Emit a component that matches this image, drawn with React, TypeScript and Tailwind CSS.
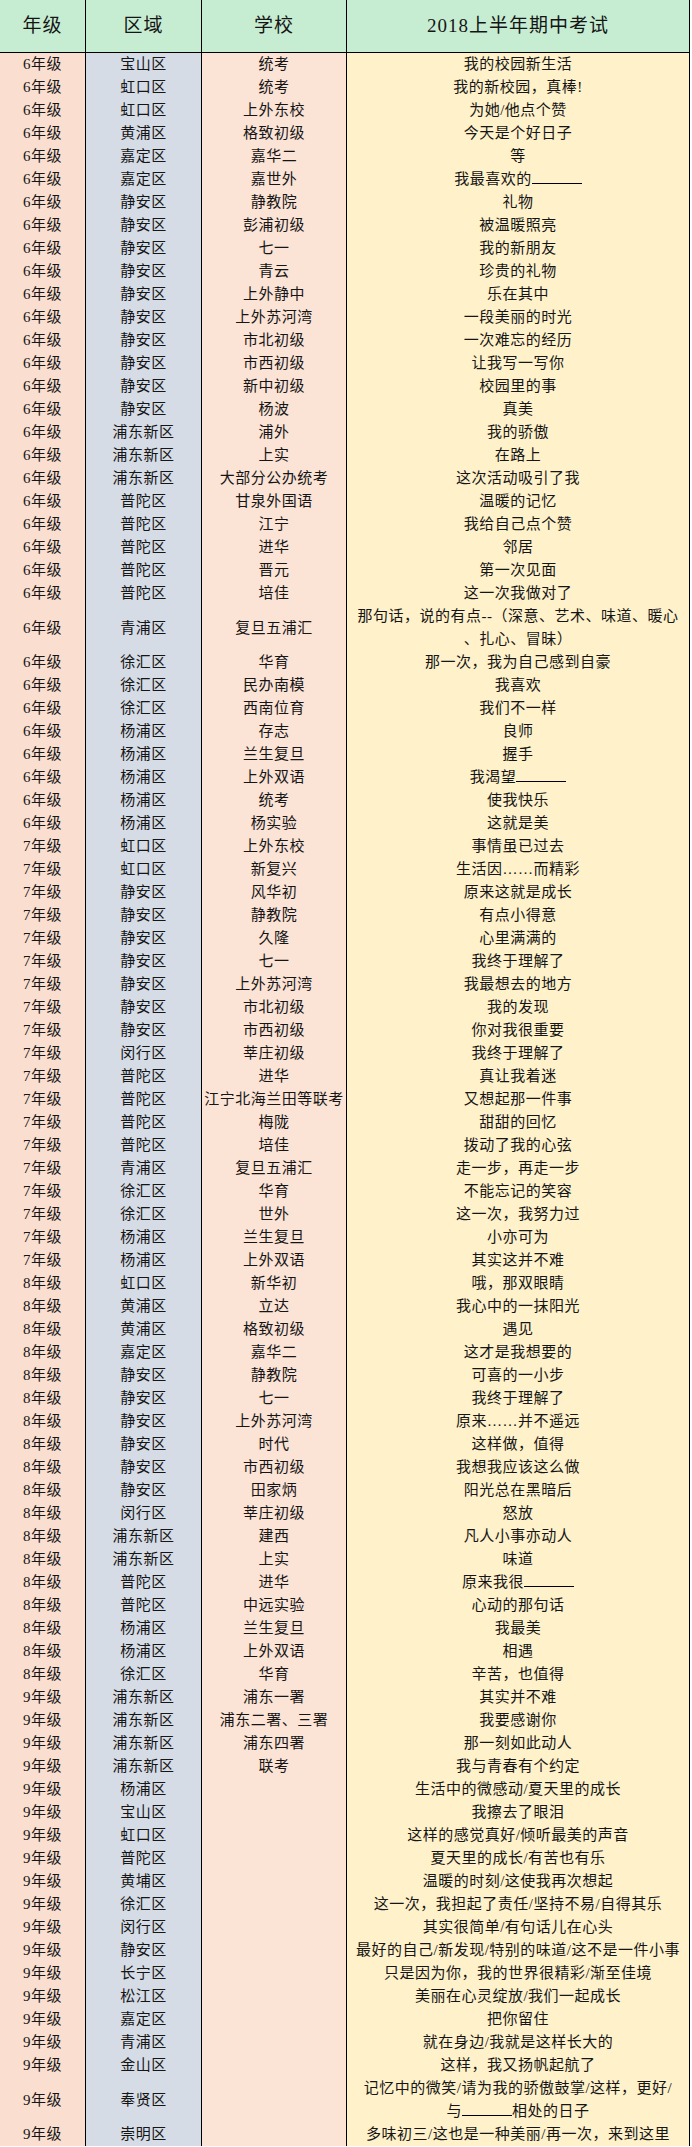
import React from "react";

type Row = [string, string, string, string];

const rows: Row[] = [
  ["6年级", "宝山区", "统考", "我的校园新生活"],
  ["6年级", "虹口区", "统考", "我的新校园，真棒!"],
  ["6年级", "虹口区", "上外东校", "为她/他点个赞"],
  ["6年级", "黄浦区", "格致初级", "今天是个好日子"],
  ["6年级", "嘉定区", "嘉华二", "等"],
  ["6年级", "嘉定区", "嘉世外", "我最喜欢的______"],
  ["6年级", "静安区", "静教院", "礼物"],
  ["6年级", "静安区", "彭浦初级", "被温暖照亮"],
  ["6年级", "静安区", "七一", "我的新朋友"],
  ["6年级", "静安区", "青云", "珍贵的礼物"],
  ["6年级", "静安区", "上外静中", "乐在其中"],
  ["6年级", "静安区", "上外苏河湾", "一段美丽的时光"],
  ["6年级", "静安区", "市北初级", "一次难忘的经历"],
  ["6年级", "静安区", "市西初级", "让我写一写你"],
  ["6年级", "静安区", "新中初级", "校园里的事"],
  ["6年级", "静安区", "杨波", "真美"],
  ["6年级", "浦东新区", "浦外", "我的骄傲"],
  ["6年级", "浦东新区", "上实", "在路上"],
  ["6年级", "浦东新区", "大部分公办统考", "这次活动吸引了我"],
  ["6年级", "普陀区", "甘泉外国语", "温暖的记忆"],
  ["6年级", "普陀区", "江宁", "我给自己点个赞"],
  ["6年级", "普陀区", "进华", "邻居"],
  ["6年级", "普陀区", "晋元", "第一次见面"],
  ["6年级", "普陀区", "培佳", "这一次我做对了"],
  ["6年级", "青浦区", "复旦五浦汇", "那句话，说的有点--（深意、艺术、味道、暖心\n、扎心、冒昧）"],
  ["6年级", "徐汇区", "华育", "那一次，我为自己感到自豪"],
  ["6年级", "徐汇区", "民办南模", "我喜欢"],
  ["6年级", "徐汇区", "西南位育", "我们不一样"],
  ["6年级", "杨浦区", "存志", "良师"],
  ["6年级", "杨浦区", "兰生复旦", "握手"],
  ["6年级", "杨浦区", "上外双语", "我渴望______"],
  ["6年级", "杨浦区", "统考", "使我快乐"],
  ["6年级", "杨浦区", "杨实验", "这就是美"],
  ["7年级", "虹口区", "上外东校", "事情虽已过去"],
  ["7年级", "虹口区", "新复兴", "生活因……而精彩"],
  ["7年级", "静安区", "风华初", "原来这就是成长"],
  ["7年级", "静安区", "静教院", "有点小得意"],
  ["7年级", "静安区", "久隆", "心里满满的"],
  ["7年级", "静安区", "七一", "我终于理解了"],
  ["7年级", "静安区", "上外苏河湾", "我最想去的地方"],
  ["7年级", "静安区", "市北初级", "我的发现"],
  ["7年级", "静安区", "市西初级", "你对我很重要"],
  ["7年级", "闵行区", "莘庄初级", "我终于理解了"],
  ["7年级", "普陀区", "进华", "真让我着迷"],
  ["7年级", "普陀区", "江宁北海兰田等联考", "又想起那一件事"],
  ["7年级", "普陀区", "梅陇", "甜甜的回忆"],
  ["7年级", "普陀区", "培佳", "拨动了我的心弦"],
  ["7年级", "青浦区", "复旦五浦汇", "走一步，再走一步"],
  ["7年级", "徐汇区", "华育", "不能忘记的笑容"],
  ["7年级", "徐汇区", "世外", "这一次，我努力过"],
  ["7年级", "杨浦区", "兰生复旦", "小亦可为"],
  ["7年级", "杨浦区", "上外双语", "其实这并不难"],
  ["8年级", "虹口区", "新华初", "哦，那双眼睛"],
  ["8年级", "黄浦区", "立达", "我心中的一抹阳光"],
  ["8年级", "黄浦区", "格致初级", "遇见"],
  ["8年级", "嘉定区", "嘉华二", "这才是我想要的"],
  ["8年级", "静安区", "静教院", "可喜的一小步"],
  ["8年级", "静安区", "七一", "我终于理解了"],
  ["8年级", "静安区", "上外苏河湾", "原来……并不遥远"],
  ["8年级", "静安区", "时代", "这样做，值得"],
  ["8年级", "静安区", "市西初级", "我想我应该这么做"],
  ["8年级", "静安区", "田家炳", "阳光总在黑暗后"],
  ["8年级", "闵行区", "莘庄初级", "怒放"],
  ["8年级", "浦东新区", "建西", "凡人小事亦动人"],
  ["8年级", "浦东新区", "上实", "味道"],
  ["8年级", "普陀区", "进华", "原来我很______"],
  ["8年级", "普陀区", "中远实验", "心动的那句话"],
  ["8年级", "杨浦区", "兰生复旦", "我最美"],
  ["8年级", "杨浦区", "上外双语", "相遇"],
  ["8年级", "徐汇区", "华育", "辛苦，也值得"],
  ["9年级", "浦东新区", "浦东一署", "其实并不难"],
  ["9年级", "浦东新区", "浦东二署、三署", "我要感谢你"],
  ["9年级", "浦东新区", "浦东四署", "那一刻如此动人"],
  ["9年级", "浦东新区", "联考", "我与青春有个约定"],
  ["9年级", "杨浦区", "", "生活中的微感动/夏天里的成长"],
  ["9年级", "宝山区", "", "我擦去了眼泪"],
  ["9年级", "虹口区", "", "这样的感觉真好/倾听最美的声音"],
  ["9年级", "普陀区", "", "夏天里的成长/有苦也有乐"],
  ["9年级", "黄埔区", "", "温暖的时刻/这使我再次想起"],
  ["9年级", "徐汇区", "", "这一次，我担起了责任/坚持不易/自得其乐"],
  ["9年级", "闵行区", "", "其实很简单/有句话儿在心头"],
  ["9年级", "静安区", "", "最好的自己/新发现/特别的味道/这不是一件小事"],
  ["9年级", "长宁区", "", "只是因为你，我的世界很精彩/渐至佳境"],
  ["9年级", "松江区", "", "美丽在心灵绽放/我们一起成长"],
  ["9年级", "嘉定区", "", "把你留住"],
  ["9年级", "青浦区", "", "就在身边/我就是这样长大的"],
  ["9年级", "金山区", "", "这样，我又扬帆起航了"],
  ["9年级", "奉贤区", "", "记忆中的微笑/请为我的骄傲鼓掌/这样，更好/\n与______相处的日子"],
  ["9年级", "崇明区", "", "多味初三/这也是一种美丽/再一次，来到这里"],
];

const Topic = ({ text }: { text: string }) => {
  const lines = text.split("\n");
  return (
    <div className="flex flex-col items-center leading-[23px]">
      {lines.map((line, i) => {
        const parts = line.split("______");
        return (
          <div key={i} className="whitespace-nowrap">
            {parts.map((p, j) => (
              <React.Fragment key={j}>
                {p}
                {j < parts.length - 1 && (
                  <span className="inline-block w-[50px] h-[14px] border-b border-black align-baseline" />
                )}
              </React.Fragment>
            ))}
          </div>
        );
      })}
    </div>
  );
};

export default function App() {
  return (
    <div
      className="w-[692px] bg-white text-[#151515]"
      style={{ fontFamily: '"Liberation Serif", "Noto Sans CJK SC", serif' }}
    >
      <div className="w-[690px] border-r border-black">
        <div className="grid grid-cols-[86px_116px_145px_1fr] h-[53px] border-b border-black bg-[#c6edd2] text-[19px] tracking-[1px]">
          <div className="flex items-center justify-center border-r border-black">年级</div>
          <div className="flex items-center justify-center border-r border-black">区域</div>
          <div className="flex items-center justify-center border-r border-black">学校</div>
          <div className="flex items-center justify-center">2018上半年期中考试</div>
        </div>
        {rows.map((r, i) => {
          const tall = r[3].includes("\n");
          return (
            <div
              key={i}
              className={`grid grid-cols-[86px_116px_145px_1fr] border-b border-black text-[15px] tracking-[0.5px] ${
                tall ? "h-[46px]" : "h-[23px]"
              }`}
            >
              <div className="flex items-center justify-center border-r border-black bg-[#fadfd1]">{r[0]}</div>
              <div className="flex items-center justify-center border-r border-black bg-[#d5dce6]">{r[1]}</div>
              <div className="flex items-center justify-center border-r border-black bg-[#fbe3d6] whitespace-nowrap">
                {r[2]}
              </div>
              <div className="flex items-center justify-center bg-[#fff1ca]">
                <Topic text={r[3]} />
              </div>
            </div>
          );
        })}
      </div>
    </div>
  );
}
